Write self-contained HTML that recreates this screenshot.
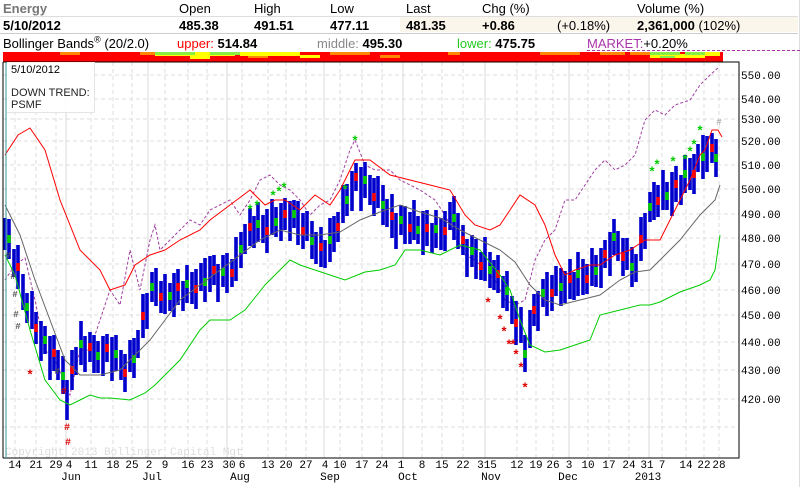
<!DOCTYPE html>
<html><head><meta charset="utf-8"><style>
body{margin:0;background:#fff;width:806px;height:487px;overflow:hidden;position:relative;font-family:"Liberation Sans",sans-serif}
.t{position:absolute;white-space:nowrap;font-size:13px;line-height:15px}
.b{font-weight:bold}
svg{position:absolute;left:0;top:0}
</style></head><body>
<div style="position:absolute;left:400px;top:17px;width:398px;height:15px;background:#fbf6ec"></div>
<div style="position:absolute;left:0;top:16px;width:798px;height:1px;background:#ddd"></div>
<div style="position:absolute;left:0;top:33px;width:798px;height:1px;background:#ccc"></div>
<div style="position:absolute;left:799px;top:0;width:1px;height:487px;background:#ddd"></div>
<div class="t b" style="left:3px;top:1px;color:#777">Energy</div>
<div class="t" style="left:179px;top:1px">Open</div>
<div class="t" style="left:254px;top:1px">High</div>
<div class="t" style="left:330px;top:1px">Low</div>
<div class="t" style="left:406px;top:1px">Last</div>
<div class="t" style="left:482px;top:1px">Chg (%)</div>
<div class="t" style="left:637px;top:1px">Volume (%)</div>
<div class="t b" style="left:3px;top:18px">5/10/2012</div>
<div class="t b" style="left:179px;top:18px">485.38</div>
<div class="t b" style="left:254px;top:18px">491.51</div>
<div class="t b" style="left:330px;top:18px">477.11</div>
<div class="t b" style="left:406px;top:18px">481.35</div>
<div class="t b" style="left:482px;top:18px">+0.86</div>
<div class="t" style="left:557px;top:18px">(+0.18%)</div>
<div class="t b" style="left:637px;top:18px">2,361,000 <span style="font-weight:normal">(102%)</span></div>
<div class="t" style="left:3px;top:36px">Bollinger Bands<sup style="font-size:9px;line-height:0">®</sup> (20/2.0)</div>
<div class="t" style="left:177px;top:36px;color:#f00">upper: <b style="color:#000">514.84</b></div>
<div class="t" style="left:317px;top:36px;color:#888">middle: <b style="color:#000">495.30</b></div>
<div class="t" style="left:457px;top:36px;color:#2c2">lower: <b style="color:#000">475.75</b></div>
<div class="t" style="left:587px;top:36px;color:#a3a">MARKET:<span style="color:#000">+0.20%</span></div>
<div style="position:absolute;left:587px;top:50px;width:213px;border-top:1px dashed #a3a"></div>
<svg width="806" height="487" xmlns="http://www.w3.org/2000/svg" font-family="'Liberation Mono', monospace" font-size="11">
<rect x="3" y="52" width="720" height="10" fill="#f00"/>
<g fill="#f80">
<rect x="60" y="52" width="20" height="3"/><rect x="140" y="52" width="30" height="3"/><rect x="330" y="52" width="40" height="3"/><rect x="380" y="55" width="20" height="3"/><rect x="448" y="52" width="12" height="3"/><rect x="540" y="52" width="40" height="3"/><rect x="600" y="52" width="25" height="3"/><rect x="630" y="52" width="20" height="3"/><rect x="248" y="55" width="20" height="3"/>
</g>
<g fill="#ff0">
<rect x="155" y="52" width="80" height="4"/><rect x="240" y="52" width="60" height="4"/><rect x="300" y="55" width="20" height="3"/><rect x="650" y="54" width="55" height="4"/><rect x="705" y="52" width="15" height="4"/><rect x="190" y="56" width="20" height="3"/>
</g>
<g fill="#8e4">
<rect x="155" y="52" width="40" height="3"/><rect x="210" y="52" width="30" height="3"/><rect x="650" y="52" width="30" height="3"/><rect x="685" y="52" width="20" height="3"/><rect x="660" y="56" width="15" height="2"/>
</g>
<rect x="3" y="62" width="736" height="396" fill="#fff"/>
<g stroke="#ddd" stroke-dasharray="4,3">
<line x1="3" x2="739" y1="75" y2="75"/><line x1="3" x2="739" y1="99" y2="99"/><line x1="3" x2="739" y1="119" y2="119"/><line x1="3" x2="739" y1="141" y2="141"/><line x1="3" x2="739" y1="165" y2="165"/><line x1="3" x2="739" y1="189" y2="189"/><line x1="3" x2="739" y1="214" y2="214"/><line x1="3" x2="739" y1="238" y2="238"/><line x1="3" x2="739" y1="264" y2="264"/><line x1="3" x2="739" y1="290" y2="290"/><line x1="3" x2="739" y1="315" y2="315"/><line x1="3" x2="739" y1="342" y2="342"/><line x1="3" x2="739" y1="370" y2="370"/><line x1="3" x2="739" y1="399" y2="399"/><line x1="3" x2="739" y1="427" y2="427"/>
<path d="M15 62V458M36 62V458M56 62V458M91 62V458M113 62V458M132 62V458M165 62V458M188 62V458M207 62V458M242 62V458M268 62V458M286 62V458M306 62V458M340 62V458M362 62V458M382 62V458M422 62V458M442 62V458M463 62V458M517 62V458M536 62V458M553 62V458M588 62V458M609 62V458M629 62V458M662 62V458M686 62V458M704 62V458M719 62V458"/>
</g>
<path d="M66 62V458M148 62V458M227 62V458M324 62V458M403 62V458M485 62V458M569 62V458M649 62V458" stroke="#d8d8d8"/>
<g fill="#000">
<text x="741" y="79">550.00</text><text x="741" y="103">540.00</text><text x="741" y="123">530.00</text><text x="741" y="145">520.00</text><text x="741" y="169">510.00</text><text x="741" y="193">500.00</text><text x="741" y="218">490.00</text><text x="741" y="242">480.00</text><text x="741" y="268">470.00</text><text x="741" y="294">460.00</text><text x="741" y="319">450.00</text><text x="741" y="346">440.00</text><text x="741" y="374">430.00</text><text x="741" y="403">420.00</text>
</g>
<g text-anchor="middle">
<text x="15" y="468">14</text><text x="36" y="468">21</text><text x="56" y="468">29</text><text x="69" y="468">4</text><text x="91" y="468">11</text><text x="113" y="468">18</text><text x="132" y="468">25</text><text x="149" y="468">2</text><text x="165" y="468">9</text><text x="188" y="468">16</text><text x="207" y="468">23</text><text x="229" y="468">30</text><text x="242" y="468">6</text><text x="268" y="468">13</text><text x="286" y="468">20</text><text x="306" y="468">27</text><text x="325" y="468">4</text><text x="340" y="468">10</text><text x="362" y="468">17</text><text x="382" y="468">24</text><text x="401" y="468">1</text><text x="422" y="468">8</text><text x="442" y="468">15</text><text x="463" y="468">22</text><text x="487" y="468">315</text><text x="517" y="468">12</text><text x="536" y="468">19</text><text x="553" y="468">26</text><text x="569" y="468">3</text><text x="588" y="468">10</text><text x="609" y="468">17</text><text x="629" y="468">24</text><text x="647" y="468">31</text><text x="662" y="468">7</text><text x="686" y="468">14</text><text x="704" y="468">22</text><text x="719" y="468">28</text>
<text x="71" y="480">Jun</text><text x="152" y="480">Jul</text><text x="240" y="480">Aug</text><text x="330" y="480">Sep</text><text x="408" y="480">Oct</text><text x="491" y="480">Nov</text><text x="568" y="480">Dec</text><text x="648" y="480">2013</text>
</g>
<text x="5" y="455" fill="#ddd">Copyright 2013 Bollinger Capital Mgt</text>
<path d="M5 280L15 265L25 258L35 300L45 350L55 360L70 395L80 350L90 350L100 320L110 290L120 305L130 250L140 290L150 240L155 225L160 250L170 240L180 230L190 220L200 225L210 210L220 205L230 200L240 215L250 200L260 180L270 175L280 185L290 190L300 200L310 215L320 205L330 200L340 180L350 150L355 140L365 165L375 170L390 170L400 180L410 185L420 190L435 200L445 215L455 235L465 255L475 260L485 270L495 280L505 300L515 305L525 300L535 260L545 240L555 230L565 200L575 200L585 185L595 170L605 160L615 170L625 165L635 155L645 120L655 110L665 115L675 105L690 100L700 85L710 75L718 68" fill="none" stroke="#a040a0" stroke-dasharray="3,2"/>
<path stroke="#0000cc" stroke-width="3.6" fill="none" d="M5 218V250M9 219V259M14 249V277M18 245V289M23 274V310M27 293V323M32 291V329M36 312V344M41 321V361M45 326V354M50 336V380M54 335V371M58 350V380M63 356V394M67 380V420M72 350V390M76 347V375M81 321V365M85 336V372M90 332V362M94 335V373M98 341V373M103 336V376M107 334V362M112 337V381M116 335V371M121 350V380M125 354V392M130 340V372M134 338V378M138 330V358M143 294V338M147 293V329M152 272V302M156 268V306M161 281V313M165 274V314M170 283V311M174 273V317M178 269V305M183 281V311M187 265V303M192 272V304M196 269V309M201 263V291M205 258V302M210 256V292M214 255V285M218 264V302M223 255V287M227 253V293M232 259V287M236 237V281M241 232V268M245 224V254M250 208V246M254 216V248M258 202V242M263 215V243M267 209V253M272 199V235M276 207V237M281 203V241M285 198V230M290 201V241M294 200V228M298 201V245M303 213V249M307 211V241M312 221V259M316 232V264M321 227V267M325 240V268M330 218V262M334 216V252M338 212V242M343 185V223M347 184V216M352 171V211M356 163V191M361 167V211M365 162V198M370 175V205M374 178V216M378 176V208M383 185V225M387 199V227M392 194V238M396 213V249M401 205V235M405 206V244M410 212V244M414 200V240M418 216V244M423 211V255M427 210V246M432 223V253M436 210V248M441 218V250M445 211V251M450 202V230M454 196V240M458 213V249M463 225V255M467 239V277M472 235V267M476 239V279M481 252V280M485 237V281M490 252V288M494 260V290M498 255V293M503 276V308M507 271V311M512 296V324M516 301V345M521 307V343M525 335V372M530 310V348M534 294V326M538 291V331M543 279V307M547 272V316M552 275V311M556 266V296M561 268V306M565 271V303M570 259V299M574 272V300M578 252V296M583 259V295M587 264V294M592 248V286M596 255V287M601 248V288M605 240V268M610 232V276M614 219V255M618 231V261M623 238V276M627 238V270M632 247V287M636 254V282M641 217V261M645 213V249M650 192V222M654 182V220M658 185V217M663 170V210M667 182V210M672 172V216M676 166V202M681 175V205M685 155V193M690 158V190M694 154V194M698 144V172M703 135V179M707 136V172M712 133V163M716 139V177"/>
<path stroke="#00cc00" stroke-width="3.6" fill="none" d="M9 235V243M27 303V311M45 336V344M63 372V380M81 340V348M98 352V360M116 350V358M134 355V363M152 283V291M170 292V300M187 280V288M205 278V286M223 268V276M241 245V253M258 220V228M276 218V226M294 210V218M312 237V245M330 236V244M347 196V204M365 176V184M383 201V209M401 216V224M418 226V234M436 225V233M454 214V222M472 247V255M490 266V274M507 287V295M525 350V358M543 289V297M561 283V291M578 270V278M596 267V275M614 233V241M632 263V271M650 203V211M667 192V200M685 170V178M703 153V161M716 154V162"/>
<path stroke="#ff0000" stroke-width="3.6" fill="none" d="M18 263V271M36 324V332M54 349V357M72 366V374M90 343V351M107 344V352M125 369V377M143 312V320M161 293V301M178 283V291M196 285V293M214 266V274M232 269V277M250 223V231M267 227V235M285 210V218M303 227V235M321 243V251M338 223V231M356 173V181M374 193V201M392 212V220M410 224V232M427 224V232M445 227V235M463 236V244M481 262V270M498 270V278M516 319V327M534 306V314M552 289V297M570 275V283M587 275V283M605 250V258M623 253V261M641 235V243M658 197V205M676 180V188M694 170V178M712 144V152"/>
<path d="M5 205L20 235L35 280L50 320L65 360L80 375L100 375L120 370L135 355L150 340L165 320L180 300L200 285L220 270L240 255L260 240L280 230L300 235L320 235L340 232L360 220L380 212L400 205L420 212L440 218L460 230L480 240L500 250L515 262L530 285L545 300L560 305L580 300L600 295L620 280L635 272L650 270L665 255L680 240L700 215L715 200L720 185" fill="none" stroke="#666"/>
<path d="M5 155L18 135L30 128L45 150L60 200L80 250L100 270L110 290L125 285L135 265L150 255L165 250L180 240L200 230L210 220L230 205L250 190L265 205L275 200L285 200L300 210L315 195L330 205L340 190L355 160L370 160L390 175L410 180L430 185L450 190L465 215L475 225L490 230L500 225L510 210L520 195L535 205L545 225L555 255L565 275L575 270L590 265L600 265L615 255L630 250L645 240L660 240L670 220L680 200L690 180L700 155L705 150L712 130L718 130L722 137" fill="none" stroke="#f00"/>
<path d="M5 255L15 275L30 330L45 380L60 400L70 405L80 400L90 395L100 398L110 398L130 400L145 393L155 385L165 375L180 360L200 330L210 320L230 320L245 310L265 285L275 275L290 260L300 265L315 270L330 275L345 280L365 272L380 270L395 265L405 250L420 250L440 255L460 245L480 250L500 275L510 290L520 320L530 345L545 352L560 350L575 345L590 340L600 315L620 310L640 305L650 305L660 302L680 292L700 285L710 280L715 270L720 235" fill="none" stroke="#00cc00"/>
<g fill="#0c0" font-size="13" font-weight="bold" text-anchor="middle">
<text x="250" y="214">*</text><text x="257" y="210">*</text><text x="273" y="200">*</text><text x="279" y="196">*</text><text x="284" y="192">*</text><text x="355" y="145">*</text><text x="345" y="194">*</text><text x="652" y="176">*</text><text x="657" y="169">*</text><text x="673" y="166">*</text><text x="685" y="164">*</text><text x="690" y="156">*</text><text x="694" y="149">*</text><text x="700" y="135">*</text>
</g>
<g fill="#d00" font-size="13" font-weight="bold" text-anchor="middle">
<text x="488" y="307">*</text><text x="500" y="324">*</text><text x="504" y="336">*</text><text x="509" y="349">*</text><text x="513" y="349">*</text><text x="516" y="359">*</text><text x="521" y="372">*</text><text x="525" y="392">*</text><text x="30" y="379">*</text>
</g>
<g fill="#d00" font-size="10" font-weight="bold" text-anchor="middle">
<text x="64" y="394">#</text><text x="67" y="430">#</text><text x="68" y="445">#</text>
</g>
<g fill="#555" font-size="9" font-weight="bold" text-anchor="middle">
<text x="8" y="258">#</text><text x="13" y="279">#</text><text x="15" y="297">#</text><text x="16" y="317">#</text><text x="18" y="329">#</text><text x="57" y="374">#</text>
</g>
<text x="719" y="125" fill="#999" font-size="9" text-anchor="middle">#</text>
<path d="M3 62V458M3 62H739V458H3" fill="none" stroke="#000"/>
<line x1="6" y1="62" x2="6" y2="458" stroke="#399"/>
</svg>
<div style="position:absolute;left:7px;top:62px;width:87px;height:50px;background:rgba(255,255,255,0.9);border-right:1px solid #e4e4e4;border-bottom:1px solid #e4e4e4"></div>
<div class="t" style="left:11px;top:63px;font-size:11px">5/10/2012</div>
<div class="t" style="left:11px;top:87px;font-size:11px;line-height:12px;color:#222">DOWN TREND:<br>PSMF</div>
</body></html>
